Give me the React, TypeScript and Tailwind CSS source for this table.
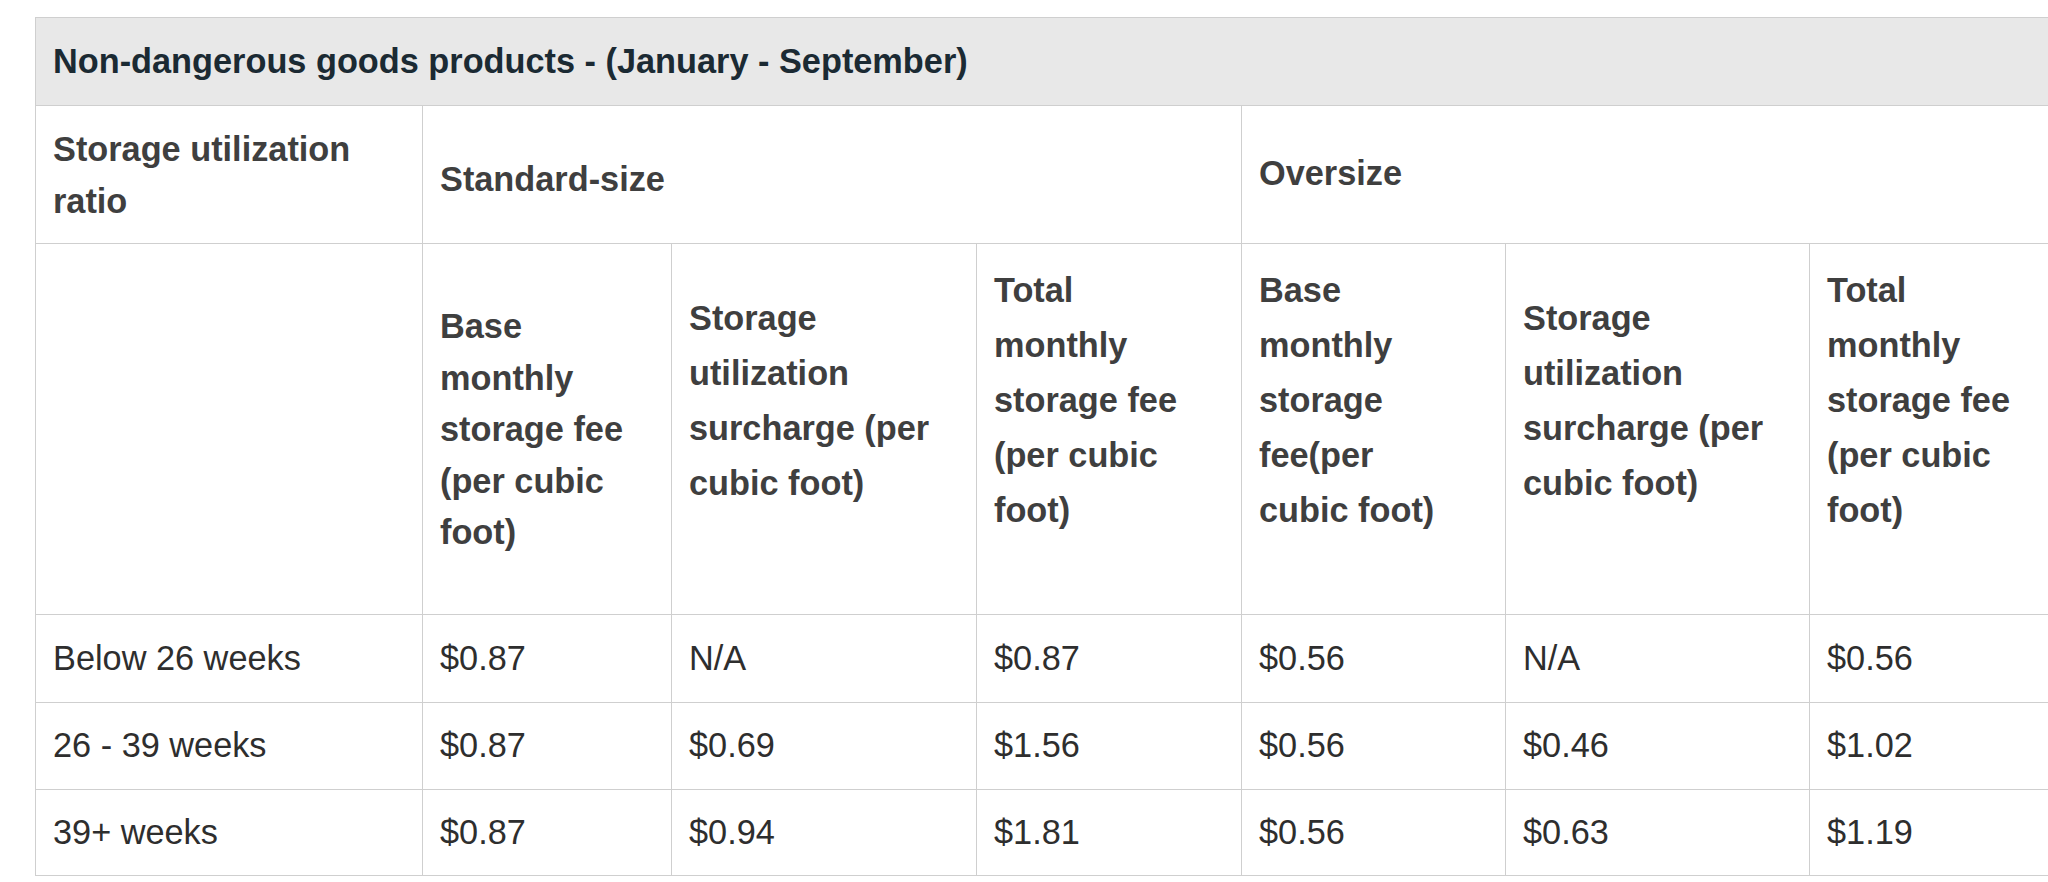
const rows = [
  ['Below 26 weeks', '$0.87', 'N/A', '$0.87', '$0.56', 'N/A', '$0.56'],
  ['26 - 39 weeks', '$0.87', '$0.69', '$1.56', '$0.56', '$0.46', '$1.02'],
  ['39+ weeks', '$0.87', '$0.94', '$1.81', '$0.56', '$0.63', '$1.19'],
]

const border = 'border border-[#cfcfcf]'

function Lines({ lines }: { lines: string[] }) {
  return (
    <>
      {lines.map((l, i) => (
        <span key={i} className="block whitespace-nowrap">
          {l}
        </span>
      ))}
    </>
  )
}

export default function App() {
  return (
    <div className="w-[2048px] h-[882px] overflow-hidden bg-white pl-[35px] pt-[17px] font-['Liberation_Sans',Arial,sans-serif] text-[34.3px]">
      <table className="table-fixed border-collapse w-[2039px]">
        <colgroup>
          <col className="w-[387px]" />
          <col className="w-[249px]" />
          <col className="w-[305px]" />
          <col className="w-[265px]" />
          <col className="w-[264px]" />
          <col className="w-[304px]" />
          <col className="w-[265px]" />
        </colgroup>
        <tbody>
          <tr className="h-[88px]">
            <td colSpan={7} className={`${border} bg-[#e8e8e8] px-[17px] align-middle font-bold text-[#1b2a33] whitespace-nowrap`}>
              Non-dangerous goods products - (January - September)
            </td>
          </tr>
          <tr className="h-[138px] font-bold text-[#3f3f3f]">
            <td className={`${border} px-[17px] align-top pt-[17px] leading-[52px]`}>
              <Lines lines={['Storage utilization', 'ratio']} />
            </td>
            <td colSpan={3} className={`${border} px-[17px] align-top pt-[47px] leading-[52px]`}>
              Standard-size
            </td>
            <td colSpan={3} className={`${border} px-[17px] align-top pt-[41px] leading-[52px]`}>
              Oversize
            </td>
          </tr>
          <tr className="h-[371px] font-bold text-[#3f3f3f]">
            <td className={border}></td>
            <td className={`${border} px-[17px] align-top pt-[57px] leading-[51.5px]`}>
              <Lines lines={['Base', 'monthly', 'storage fee', '(per cubic', 'foot)']} />
            </td>
            <td className={`${border} px-[17px] align-top pt-[47px] leading-[55px]`}>
              <Lines lines={['Storage', 'utilization', 'surcharge (per', 'cubic foot)']} />
            </td>
            <td className={`${border} px-[17px] align-top pt-[19px] leading-[55px]`}>
              <Lines lines={['Total', 'monthly', 'storage fee', '(per cubic', 'foot)']} />
            </td>
            <td className={`${border} px-[17px] align-top pt-[19px] leading-[55px]`}>
              <Lines lines={['Base', 'monthly', 'storage', 'fee(per', 'cubic foot)']} />
            </td>
            <td className={`${border} px-[17px] align-top pt-[47px] leading-[55px]`}>
              <Lines lines={['Storage', 'utilization', 'surcharge (per', 'cubic foot)']} />
            </td>
            <td className={`${border} px-[17px] align-top pt-[19px] leading-[55px]`}>
              <Lines lines={['Total', 'monthly', 'storage fee', '(per cubic', 'foot)']} />
            </td>
          </tr>
          {rows.map((r, i) => (
            <tr key={i} className={i === 0 ? 'h-[88px]' : i === 1 ? 'h-[87px]' : 'h-[86px]'}>
              {r.map((c, j) => (
                <td key={j} className={`${border} px-[17px] align-middle text-[#2e2e2e] whitespace-nowrap`}>
                  {c}
                </td>
              ))}
            </tr>
          ))}
        </tbody>
      </table>
    </div>
  )
}
